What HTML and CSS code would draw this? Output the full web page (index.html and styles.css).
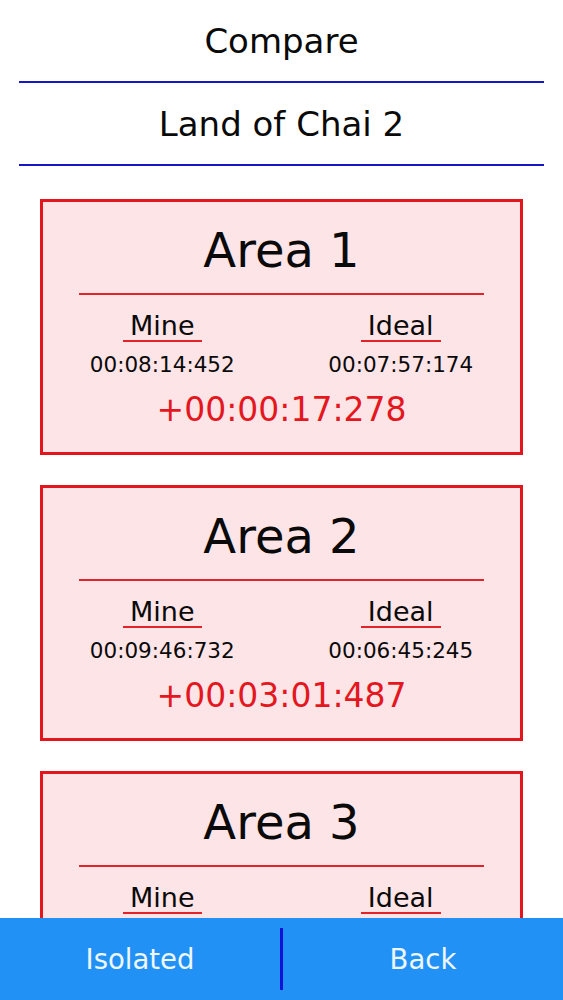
FILE: index.html
```html
<html>
<head>
    <meta charset="UTF-8">
    <meta name="viewport" content="width=device-width, initial-scale=1.0">
    <title>Compare</title>
    <link rel="stylesheet" href="styles.css">
</head>
<body>

    <div class="content">
        <div class="header">
            <div class="header-row">Compare</div>
            <div class="header-row">Land of Chai 2</div>
        </div>

        <div class="area-list">
            <div class="area-card">
                <h2>Area 1</h2>
                <div class="times">
                    <div class="time-col">
                        <span class="label">Mine</span>
                        <p>00:08:14:452</p>
                    </div>
                    <div class="time-col">
                        <span class="label">Ideal</span>
                        <p>00:07:57:174</p>
                    </div>
                </div>
                <div class="diff">+00:00:17:278</div>
            </div>

            <div class="area-card">
                <h2>Area 2</h2>
                <div class="times">
                    <div class="time-col">
                        <span class="label">Mine</span>
                        <p>00:09:46:732</p>
                    </div>
                    <div class="time-col">
                        <span class="label">Ideal</span>
                        <p>00:06:45:245</p>
                    </div>
                </div>
                <div class="diff">+00:03:01:487</div>
            </div>

            <div class="area-card">
                <h2>Area 3</h2>
                <div class="times">
                    <div class="time-col">
                        <span class="label">Mine</span>
                    </div>
                    <div class="time-col">
                        <span class="label">Ideal</span>
                    </div>
                </div>
            </div>
        </div>
    </div>

    <div class="bottom-bar">
        <button class="bar-button">Isolated</button>
        <div class="bar-divider"></div>
        <button class="bar-button">Back</button>
    </div>

</body>
</html>
```

FILE: styles.css
```css
body {
    font-family: "DejaVu Sans", Verdana, sans-serif;
    margin: 0;
    height: 100vh;
    display: flex;
    flex-direction: column;
    color: #0a0a0a;
    background: #fff;
}
.content {
    flex: 1;
    overflow-y: auto;
    scrollbar-width: none;
}
.header {
    margin: 0 19px;
}
.header-row {
    height: 81px;
    line-height: 83px;
    text-align: center;
    font-size: 34px;
    border-bottom: 2px solid #1616c4;
}
.area-list {
    padding-top: 33px;
}
.area-card {
    margin: 0 40px 30px;
    height: 250px;
    border: 3px solid #e3161e;
    background-color: #fde4e6;
    text-align: center;
}
.area-card h2 {
    margin: 21px 36px 0;
    padding-bottom: 14px;
    height: 56px;
    line-height: 54px;
    font-size: 48px;
    font-weight: normal;
    border-bottom: 2px solid #e3232a;
}
.times {
    display: flex;
    margin-top: 16px;
}
.time-col {
    flex: 1;
}
.label {
    display: inline-block;
    padding: 0 7px;
    font-size: 27px;
    line-height: 29px;
    border-bottom: 2px solid #e3232a;
}
.time-col p {
    margin: 10px 0 0;
    font-size: 21.5px;
    line-height: 26px;
}
.diff {
    margin-top: 13px;
    font-size: 33px;
    line-height: 38px;
    color: #e4161e;
}
.bottom-bar {
    flex: none;
    height: 82px;
    display: flex;
    align-items: center;
    background-color: #2191f5;
}
.bar-button {
    flex: 1;
    height: 100%;
    border: none;
    background: none;
    color: #eef6ff;
    font-family: "DejaVu Sans", Verdana, sans-serif;
    font-size: 27.5px;
    padding: 0;
}
.bar-divider {
    width: 3px;
    height: 62px;
    background-color: #1212d6;
}
```
